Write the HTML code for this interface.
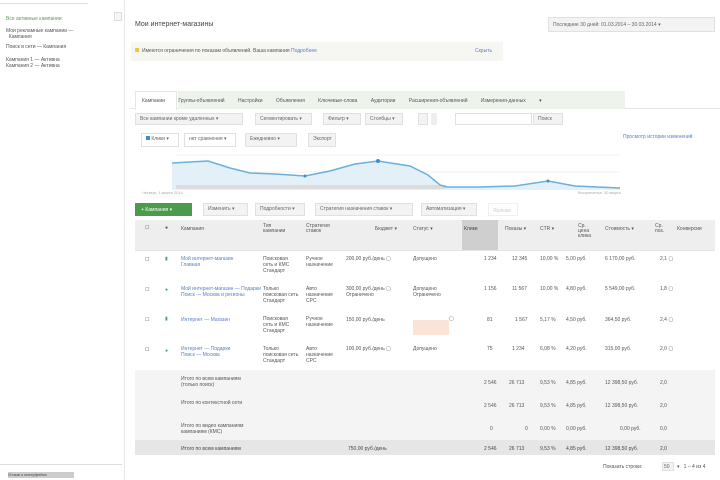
<!DOCTYPE html>
<html><head><meta charset="utf-8"><style>
*{margin:0;padding:0;box-sizing:border-box}
body{width:720px;height:480px;overflow:hidden;background:#fff;font-family:"Liberation Sans","DejaVu Sans",sans-serif;font-size:5px;color:#444;position:relative}
.a{position:absolute;white-space:nowrap}
.t{color:#555}
.l{color:#5a80c8}
.btn{position:absolute;background:#f3f3f3;border:1px solid #e0e0e0;color:#666;padding:2px 4px;font-size:5px}
.row{position:absolute;left:135px;width:580px}
</style></head><body>
<div class="a" style="left:0;top:0;width:125px;height:480px;border-right:1px solid #e8e8e8"></div>
<div class="a" style="left:0;top:0;width:88px;height:4px;border-bottom:1px solid #ddd"></div>
<div class="a" style="left:6px;top:16px;color:#5a9a5a">Все активные кампании</div>
<div class="a" style="left:114px;top:12px;width:8px;height:9px;border:1px solid #ddd;background:#f5f5f5"></div>
<div class="a t" style="left:6px;top:28px;line-height:6px">Мои рекламные кампании —<br>&nbsp;&nbsp;Кампания</div>
<div class="a t" style="left:6px;top:44px">Поиск в сети — Кампания</div>
<div class="a t" style="left:6px;top:57px;line-height:6px">Кампания 1 — Активна<br>Кампания 2 — Активна</div>
<div class="a" style="left:0;top:464px;width:122px;border-top:1px solid #ddd"></div>
<div class="a" style="left:8px;top:472px;width:66px;height:6px;background:#ccc;color:#444;font-size:4px">Отзыв о интерфейсе</div>
<div class="a" style="left:135px;top:21px;font-size:7px;color:#444">Мои интернет-магазины</div>
<div class="btn" style="left:548px;top:17px;width:167px;height:15px;padding-top:4px">Последние 30 дней: 01.03.2014 – 30.03.2014 ▾</div>
<div class="a" style="left:131px;top:42px;width:372px;height:19px;background:#f6f6f2"></div>
<div class="a" style="left:135px;top:48px;width:4px;height:4px;background:#e8c840"></div>
<div class="a t" style="left:142px;top:48px">Имеются ограничения по показам объявлений. Ваша кампания <span class="l">Подробнее</span></div>
<div class="a l" style="left:475px;top:48px">Скрыть</div>
<div class="a" style="left:130px;top:91px;width:590px;height:18px;border-bottom:1px solid #e5e5e5"></div>
<div class="a" style="left:178px;top:91px;width:447px;height:18px;background:#eef4ec"></div>
<div class="a" style="left:135px;top:91px;width:42px;height:19px;background:#fff;border:1px solid #e5e5e5;border-bottom:none"></div>
<div class="a t" style="left:142px;top:98px;word-spacing:12px">Кампании Группы-объявлений Настройки Объявления Ключевые-слова Аудитории Расширения-объявлений Измерения-данных ▾</div>
<div class="btn" style="left:135px;top:113px;width:108px;height:12px">Все кампании кроме удаленных ▾</div>
<div class="btn" style="left:255px;top:113px;width:57px;height:12px">Сегментировать ▾</div>
<div class="btn" style="left:323px;top:113px;width:38px;height:12px">Фильтр ▾</div>
<div class="btn" style="left:365px;top:113px;width:38px;height:12px">Столбцы ▾</div>
<div class="btn" style="left:418px;top:113px;width:10px;height:12px"></div>
<div class="a" style="left:431px;top:113px;width:6px;height:12px;background:#eee"></div>
<div class="a" style="left:455px;top:113px;width:77px;height:12px;border:1px solid #e0e0e0"></div>
<div class="btn" style="left:533px;top:113px;width:30px;height:12px">Поиск</div>
<div class="btn" style="left:141px;top:133px;width:38px;height:14px;background:#fff"><span style="display:inline-block;width:4px;height:4px;background:#3a8fd0"></span> Клики ▾</div>
<div class="btn" style="left:184px;top:133px;width:52px;height:14px;background:#fff">нет сравнения ▾</div>
<div class="btn" style="left:245px;top:133px;width:52px;height:14px">Ежедневно ▾</div>
<div class="btn" style="left:308px;top:133px;width:28px;height:14px">Экспорт</div>
<div class="a l" style="left:623px;top:134px">Просмотр истории изменений</div>
<svg class="a" style="left:130px;top:148px" width="500" height="50">
<line x1="46" y1="7" x2="490" y2="7" stroke="#f0f0f0"/>
<line x1="46" y1="24" x2="490" y2="24" stroke="#f0f0f0"/>
<polygon points="42,15 78,13 100,20 120,25 145,26 175,28 200,23 225,16 248,13 280,18 298,27 310,37 317,39 350,39 385,38 418,33 445,38 490,40 490,42 42,42" fill="#e3f0f8"/>
<rect x="46" y="37" width="270" height="4" fill="#dcdcdc"/>
<polyline points="42,15 78,13 100,20 120,25 145,26 175,28 200,23 225,16 248,13 280,18 298,27 310,37 317,39 350,39 385,38 418,33 445,38 490,40" fill="none" stroke="#6ab0dc" stroke-width="1.5"/>
<circle cx="248" cy="13" r="2" fill="#3a8fd0"/><circle cx="175" cy="28" r="1.5" fill="#3a8fd0"/><circle cx="418" cy="33" r="1.5" fill="#3a8fd0"/>
<text x="12" y="46" font-size="4" fill="#aaa">Четверг, 1 марта 2014</text>
<text x="448" y="46" font-size="4" fill="#aaa">Воскресенье, 30 марта</text>
</svg>
<div class="a" style="left:135px;top:203px;width:57px;height:13px;background:#4c9a4c;color:#fff;padding:4px 6px">+ Кампания ▾</div>
<div class="btn" style="left:203px;top:203px;width:45px;height:13px">Изменить ▾</div>
<div class="btn" style="left:255px;top:203px;width:50px;height:13px">Подробности ▾</div>
<div class="btn" style="left:315px;top:203px;width:98px;height:13px">Стратегия назначения ставок ▾</div>
<div class="btn" style="left:421px;top:203px;width:56px;height:13px">Автоматизация ▾</div>
<div class="a" style="left:488px;top:203px;width:30px;height:13px;border:1px solid #f0f0f0;color:#ccc;padding:4px">Ярлыки</div>
<div class="row" style="top:220px;height:30px;background:#eeeeee"></div>
<div class="a" style="left:462px;top:220px;width:36px;height:30px;background:#cfcfcf"></div>
<div class="a t" style="left:145px;top:225px">☐</div>
<div class="a t" style="left:165px;top:225px">●</div>
<div class="a t" style="left:181px;top:226px">Кампания</div>
<div class="a t" style="left:263px;top:224px;line-height:5px">Тип<br>кампании</div>
<div class="a t" style="left:306px;top:224px;line-height:5px">Стратегия<br>ставок</div>
<div class="a t" style="left:375px;top:226px">Бюджет ▾</div>
<div class="a t" style="left:413px;top:226px">Статус ▾</div>
<div class="a" style="left:464px;top:226px;color:#444">Клики</div>
<div class="a t" style="left:505px;top:226px">Показы ▾</div>
<div class="a t" style="left:540px;top:226px">CTR ▾</div>
<div class="a t" style="left:578px;top:224px;line-height:5px">Ср.<br>цена<br>клика</div>
<div class="a t" style="left:605px;top:226px">Стоимость ▾</div>
<div class="a t" style="left:655px;top:224px;line-height:5px">Ср.<br>поз.</div>
<div class="a t" style="left:677px;top:226px">Конверсии</div>
<div class="a" style="left:135px;top:250px;width:580px;border-top:1px solid #e5e5e5"></div>
<div class="a t" style="left:145px;top:257px">☐</div><div class="a" style="left:165px;top:256px;color:#3caa6e">▮</div>
<div class="a l" style="left:181px;top:256px;line-height:6px">Мой интернет-магазин<br>Главная</div>
<div class="a t" style="left:263px;top:256px;line-height:6px">Поисковая<br>сеть и КМС<br>Стандарт</div>
<div class="a t" style="left:306px;top:256px;line-height:6px">Ручное<br>назначение</div>
<div class="a t" style="left:346px;top:256px">200,00 руб./день ▢</div>
<div class="a t" style="left:413px;top:256px">Допущено</div>
<div class="a t" style="left:484px;top:256px">1 234</div><div class="a t" style="left:512px;top:256px">12 345</div><div class="a t" style="left:540px;top:256px">10,00 %</div><div class="a t" style="left:566px;top:256px">5,00 руб.</div><div class="a t" style="left:605px;top:256px">6 170,00 руб.</div><div class="a t" style="left:660px;top:256px">2,1 ▢</div>
<div class="a t" style="left:145px;top:287px">☐</div><div class="a" style="left:165px;top:287px;color:#3caa6e">●</div>
<div class="a l" style="left:181px;top:286px;line-height:6px">Мой интернет-магазин — Подарки<br>Поиск — Москва и регионы</div>
<div class="a t" style="left:263px;top:286px;line-height:6px">Только<br>поисковая сеть<br>Стандарт</div>
<div class="a t" style="left:306px;top:286px;line-height:6px">Авто<br>назначение<br>CPC</div>
<div class="a t" style="left:346px;top:286px;line-height:6px">300,00 руб./день ▢<br>Ограничено</div>
<div class="a t" style="left:413px;top:286px;line-height:6px">Допущено<br>Ограничено</div>
<div class="a t" style="left:484px;top:286px">1 156</div><div class="a t" style="left:512px;top:286px">11 567</div><div class="a t" style="left:540px;top:286px">10,00 %</div><div class="a t" style="left:566px;top:286px">4,80 руб.</div><div class="a t" style="left:605px;top:286px">5 549,00 руб.</div><div class="a t" style="left:660px;top:286px">1,8 ▢</div>
<div class="a t" style="left:145px;top:317px">☐</div><div class="a" style="left:165px;top:316px;color:#3caa6e">▮</div>
<div class="a l" style="left:181px;top:317px">Интернет — Магазин</div>
<div class="a t" style="left:263px;top:316px;line-height:6px">Поисковая<br>сеть и КМС<br>Стандарт</div>
<div class="a t" style="left:306px;top:316px;line-height:6px">Ручное<br>назначение</div>
<div class="a t" style="left:346px;top:317px">150,00 руб./день</div>
<div class="a" style="left:413px;top:320px;width:36px;height:15px;background:#fbe3d8"></div>
<div class="a t" style="left:449px;top:316px">▢</div>
<div class="a t" style="left:487px;top:317px">81</div><div class="a t" style="left:515px;top:317px">1 567</div><div class="a t" style="left:540px;top:317px">5,17 %</div><div class="a t" style="left:566px;top:317px">4,50 руб.</div><div class="a t" style="left:605px;top:317px">364,50 руб.</div><div class="a t" style="left:660px;top:317px">2,4 ▢</div>
<div class="a t" style="left:145px;top:347px">☐</div><div class="a" style="left:165px;top:348px;color:#3caa6e">●</div>
<div class="a l" style="left:181px;top:346px;line-height:6px">Интернет — Подарки<br>Поиск — Москва</div>
<div class="a t" style="left:263px;top:346px;line-height:6px">Только<br>поисковая сеть<br>Стандарт</div>
<div class="a t" style="left:306px;top:346px;line-height:6px">Авто<br>назначение<br>CPC</div>
<div class="a t" style="left:346px;top:346px">100,00 руб./день ▢</div>
<div class="a t" style="left:413px;top:346px">Допущено</div>
<div class="a t" style="left:487px;top:346px">75</div><div class="a t" style="left:512px;top:346px">1 234</div><div class="a t" style="left:540px;top:346px">6,08 %</div><div class="a t" style="left:566px;top:346px">4,20 руб.</div><div class="a t" style="left:605px;top:346px">315,00 руб.</div><div class="a t" style="left:660px;top:346px">2,0 ▢</div>
<div class="row" style="top:370px;height:70px;background:#f4f4f4"></div>
<div class="row" style="top:440px;height:15px;background:#e6e6e6"></div>
<div class="a t" style="left:181px;top:376px;line-height:6px">Итого по всем кампаниям<br>(только поиск)</div>
<div class="a t" style="left:181px;top:400px">Итого по контекстной сети</div>
<div class="a t" style="left:181px;top:423px;line-height:6px">Итого по видео кампаниям<br>кампаниям (КМС)</div>
<div class="a" style="left:181px;top:446px">Итого по всем кампаниям</div>
<div class="a" style="left:348px;top:446px">750,00 руб./день</div>
<div class="a t" style="left:484px;top:380px">2 546</div><div class="a t" style="left:509px;top:380px">26 713</div><div class="a t" style="left:540px;top:380px">9,53 %</div><div class="a t" style="left:566px;top:380px">4,85 руб.</div><div class="a t" style="left:605px;top:380px">12 398,50 руб.</div><div class="a t" style="left:660px;top:380px">2,0</div>
<div class="a t" style="left:484px;top:403px">2 546</div><div class="a t" style="left:509px;top:403px">26 713</div><div class="a t" style="left:540px;top:403px">9,53 %</div><div class="a t" style="left:566px;top:403px">4,85 руб.</div><div class="a t" style="left:605px;top:403px">12 398,50 руб.</div><div class="a t" style="left:660px;top:403px">2,0</div>
<div class="a t" style="left:490px;top:426px">0</div><div class="a t" style="left:525px;top:426px">0</div><div class="a t" style="left:540px;top:426px">0,00 %</div><div class="a t" style="left:566px;top:426px">0,00 руб.</div><div class="a t" style="left:620px;top:426px">0,00 руб.</div><div class="a t" style="left:660px;top:426px">0,0</div>
<div class="a" style="left:484px;top:446px">2 546</div><div class="a" style="left:509px;top:446px">26 713</div><div class="a" style="left:540px;top:446px">9,53 %</div><div class="a" style="left:566px;top:446px">4,85 руб.</div><div class="a" style="left:605px;top:446px">12 398,50 руб.</div><div class="a" style="left:660px;top:446px">2,0</div>
<div class="a t" style="left:603px;top:464px">Показать строки:</div>
<div class="btn" style="left:662px;top:462px;width:12px;height:9px;padding:1px">50</div>
<div class="a t" style="left:677px;top:464px">▾ &nbsp; 1 – 4 из 4</div>
</body></html>
